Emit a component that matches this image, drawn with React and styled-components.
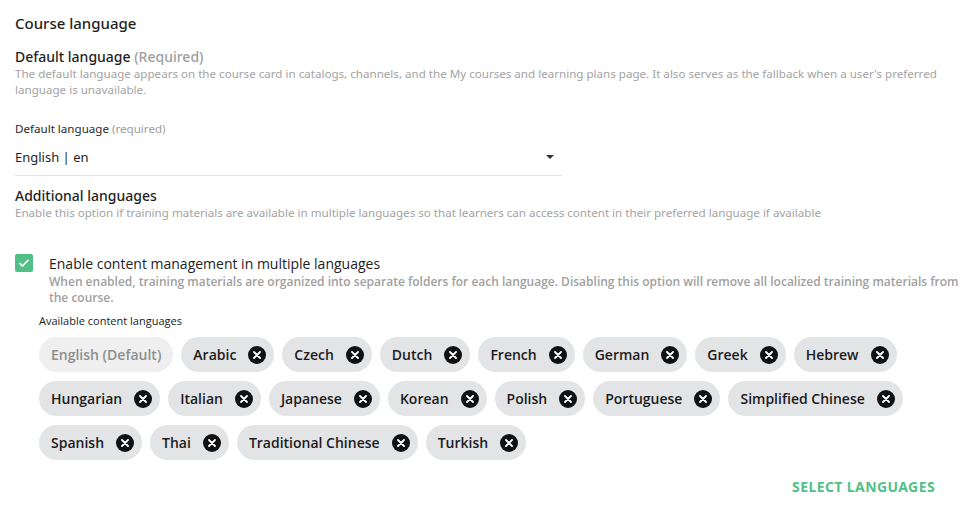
import React from 'react';
import styled, { createGlobalStyle } from 'styled-components';

const GlobalStyle = createGlobalStyle`
  body {
    margin: 0;
    background: #fff;
    font-family: "Noto Sans", Lato, sans-serif;
    color: #1f1f1f;
  }
`;

const Page = styled.div`
  padding: 13px 15px 0 15px;
  display: flex;
  flex-direction: column;
`;

const Title = styled.h2`
  margin: 0;
  font-size: 15px;
  font-weight: 500;
  line-height: 20px;
`;

const SectionTitle = styled.h3`
  margin: ${props => props.top}px 0 0;
  font-size: 14px;
  font-weight: 500;
  line-height: 18px;
`;

const Muted = styled.span`
  color: #9e9e9e;
`;

const Help = styled.p`
  margin: 0;
  font-size: 11.6px;
  line-height: 16px;
  color: #a3a3a3;
`;

const FieldLabel = styled.div`
  margin-top: 24px;
  font-size: 11.6px;
  line-height: 14px;
  color: #2a2a2a;
`;

const Select = styled.div`
  width: 547px;
  height: 34px;
  margin-top: 6px;
  display: flex;
  align-items: center;
  justify-content: space-between;
  border-bottom: 1px solid #e3e3e3;
  font-size: 13px;
  box-sizing: border-box;
  padding-bottom: 4px;
`;

const Caret = styled.span`
  width: 0;
  height: 0;
  margin-right: 8px;
  border-left: 4px solid transparent;
  border-right: 4px solid transparent;
  border-top: 4px solid #333;
`;

const CheckRow = styled.div`
  margin-top: 33px;
  display: flex;
  align-items: flex-start;
  gap: 16px;
  font-family: "Open Sans", sans-serif;
`;

const Box = styled.span`
  flex: none;
  width: 18px;
  height: 18px;
  margin-top: 0;
  border-radius: 2px;
  background: #4fbf85;
  display: flex;
  align-items: center;
  justify-content: center;
`;

const CheckText = styled.div`
  display: flex;
  flex-direction: column;
`;

const CheckLabel = styled.div`
  font-size: 14px;
  line-height: 20px;
  color: #222;
`;

const CheckHelp = styled.div`
  font-size: 12px;
  line-height: 16px;
  font-weight: 600;
  color: #a0a0a0;
`;

const Languages = styled.div`
  margin-left: 24px;
  margin-top: 7px;
  font-family: "Open Sans", sans-serif;
`;

const LangLabel = styled.div`
  font-size: 11px;
  line-height: 16px;
  color: #222;
`;

const Chips = styled.div`
  margin-top: 8px;
  display: flex;
  flex-wrap: wrap;
  gap: 9px 8px;
  max-width: 880px;
`;

const Chip = styled.div`
  height: 35px;
  display: flex;
  align-items: center;
  gap: 12px;
  padding: ${props => (props.locked ? '0 12px' : '0 8px 0 12px')};
  border-radius: 18px;
  background: ${props => (props.locked ? '#efeff0' : '#e3e4e6')};
  color: ${props => (props.locked ? '#8e8e8e' : '#1c1c1c')};
  font-size: 14px;
  font-weight: 600;
  box-sizing: border-box;
`;

const Remove = styled.span`
  width: 18px;
  height: 18px;
  border-radius: 50%;
  background: #111;
  display: flex;
  align-items: center;
  justify-content: center;
`;

const Footer = styled.div`
  display: flex;
  justify-content: flex-end;
  margin-top: 17px;
  padding-right: 30px;
`;

const TextButton = styled.button`
  border: 0;
  background: none;
  padding: 0;
  font-family: "Noto Sans", sans-serif;
  font-size: 14px;
  font-weight: 700;
  letter-spacing: 0.4px;
  color: #52bf87;
`;

const langs = [
  'Arabic', 'Czech', 'Dutch', 'French', 'German', 'Greek', 'Hebrew',
  'Hungarian', 'Italian', 'Japanese', 'Korean', 'Polish', 'Portuguese',
  'Simplified Chinese', 'Spanish', 'Thai', 'Traditional Chinese', 'Turkish'
];

const XIcon = () => (
  <svg width="8" height="8" viewBox="0 0 8 8">
    <path d="M1 1L7 7M7 1L1 7" stroke="#fff" strokeWidth="1.8" strokeLinecap="round" />
  </svg>
);

export default function App() {
  return (
    <Page>
      <GlobalStyle />
      <Title>Course language</Title>
      <SectionTitle top={15}>
        Default language <Muted>(Required)</Muted>
      </SectionTitle>
      <Help>
        The default language appears on the course card in catalogs, channels, and the My courses and learning plans page. It also serves as the fallback when a user's preferred language is unavailable.
      </Help>
      <FieldLabel>
        Default language <Muted>(required)</Muted>
      </FieldLabel>
      <Select>
        <span>English | en</span>
        <Caret />
      </Select>
      <SectionTitle top={11}>Additional languages</SectionTitle>
      <Help>
        Enable this option if training materials are available in multiple languages so that learners can access content in their preferred language if available
      </Help>
      <CheckRow>
        <Box>
          <svg width="12" height="10" viewBox="0 0 12 10">
            <path d="M1.5 5.2L4.4 8L10.5 1.8" fill="none" stroke="#fff" strokeWidth="1.6" />
          </svg>
        </Box>
        <CheckText>
          <CheckLabel>Enable content management in multiple languages</CheckLabel>
          <CheckHelp>
            When enabled, training materials are organized into separate folders for each language. Disabling this option will remove all localized training materials from the course.
          </CheckHelp>
        </CheckText>
      </CheckRow>
      <Languages>
        <LangLabel>Available content languages</LangLabel>
        <Chips>
          <Chip locked>English (Default)</Chip>
          {langs.map(l => (
            <Chip key={l}>
              {l}
              <Remove>
                <XIcon />
              </Remove>
            </Chip>
          ))}
        </Chips>
      </Languages>
      <Footer>
        <TextButton>SELECT LANGUAGES</TextButton>
      </Footer>
    </Page>
  );
}
